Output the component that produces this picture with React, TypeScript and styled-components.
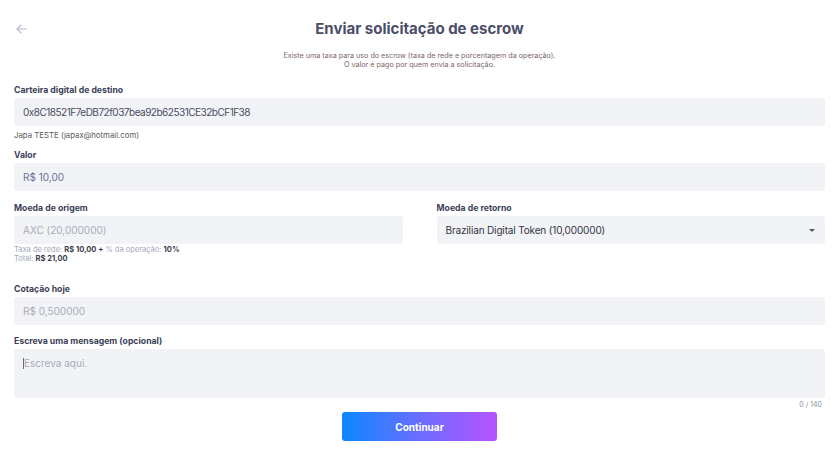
import React from "react";
import styled, { createGlobalStyle } from "styled-components";

const GlobalStyle = createGlobalStyle`
  body {
    margin: 0;
    background: #ffffff;
    font-family: Inter, "Open Sans", sans-serif;
  }
`;

const Page = styled.div`
  display: flex;
  flex-direction: column;
  width: 839px;
  padding: 0 14px;
  box-sizing: border-box;
`;

const Header = styled.div`
  display: grid;
  grid-template-columns: 40px 1fr 40px;
  align-items: center;
  padding-top: 18px;
`;

const BackButton = styled.button`
  display: flex;
  align-items: center;
  justify-content: flex-start;
  padding: 0 0 0 2px;
  border: none;
  background: none;
  cursor: pointer;
`;

const Title = styled.h1`
  margin: 0;
  font-size: 15px;
  line-height: 22px;
  font-weight: 700;
  color: #4b4e68;
  text-align: center;
`;

const Notice = styled.p`
  margin: 11px 0 0;
  font-size: 7.2px;
  line-height: 9px;
  color: #7a6566;
  text-align: center;
`;

const Field = styled.div<{ $top: number }>`
  display: flex;
  flex-direction: column;
  margin-top: ${(p) => p.$top}px;
  min-width: 0;
`;

const Label = styled.label`
  font-size: 8.7px;
  line-height: 12px;
  font-weight: 700;
  color: #3c3f57;
  margin-bottom: 2px;
`;

const Input = styled.input<{ $tone: "dark" | "blue" | "muted"; $tight?: boolean }>`
  height: 28px;
  box-sizing: border-box;
  border: none;
  border-radius: 3px;
  background: #f2f3f7;
  padding: 0 9px;
  font: inherit;
  font-size: 10px;
  letter-spacing: ${(p) => (p.$tight ? "-0.5px" : "0")};
  outline: none;
  color: ${(p) =>
    p.$tone === "dark" ? "#4a4c5e" : p.$tone === "blue" ? "#6a7091" : "#a8abb9"};
`;

const Select = styled.div`
  display: flex;
  align-items: center;
  justify-content: space-between;
  height: 28px;
  border-radius: 3px;
  background: #f2f3f7;
  padding: 0 10px 0 9px;
  font-size: 10px;
  letter-spacing: -0.15px;
  color: #33343f;
`;

const Caret = styled.span`
  width: 0;
  height: 0;
  border-left: 3px solid transparent;
  border-right: 3px solid transparent;
  border-top: 3px solid #555762;
`;

const Hint = styled.div`
  margin-top: 4px;
  font-size: 7.8px;
  line-height: 10px;
  color: #5d5858;
`;

const Row = styled.div`
  display: grid;
  grid-template-columns: 1fr 1fr;
  column-gap: 34px;
  margin-top: 11px;
`;

const Fees = styled.div`
  margin-top: 1px;
  font-size: 7.5px;
  line-height: 9px;
  color: #a3a7b8;

  b {
    color: #3a3c4c;
    font-weight: 700;
  }
`;

const MessageBox = styled.div`
  height: 49px;
  box-sizing: border-box;
  border-radius: 3px;
  background: #f2f3f7;
  padding: 8px 9px;
  font-size: 10px;
  line-height: 12px;
  color: #a8abb9;
  display: flex;
  align-items: flex-start;
`;

const TextCursor = styled.span`
  display: inline-block;
  width: 1px;
  height: 11px;
  margin-top: 1px;
  background: #6a6c78;
`;

const Counter = styled.div`
  margin-top: 2px;
  padding-right: 3px;
  text-align: right;
  font-size: 7px;
  line-height: 10px;
  color: #8b8e9a;
`;

const Footer = styled.div`
  display: flex;
  justify-content: center;
  margin-top: 2px;
`;

const ContinueButton = styled.button`
  width: 155px;
  height: 29px;
  border: none;
  border-radius: 3px;
  background: linear-gradient(90deg, #0b87ff 0%, #6a6eff 50%, #b653ff 100%);
  color: #ffffff;
  font: inherit;
  font-size: 10px;
  font-weight: 700;
  cursor: pointer;
`;

function ArrowLeft() {
  return (
    <svg width="11" height="10" viewBox="0 0 11 10" fill="none">
      <path d="M10.5 5H1M5 1L1 5l4 4" stroke="#b7b8da" strokeWidth="1.1" strokeLinecap="round" strokeLinejoin="round" />
    </svg>
  );
}

export default function App() {
  return (
    <>
      <GlobalStyle />
      <Page>
        <Header>
          <BackButton aria-label="Voltar">
            <ArrowLeft />
          </BackButton>
          <Title>Enviar solicitação de escrow</Title>
          <span />
        </Header>
        <Notice>
          Existe uma taxa para uso do escrow (taxa de rede e porcentagem da operação).
          <br />O valor é pago por quem envia a solicitação.
        </Notice>

        <Field $top={15}>
          <Label>Carteira digital de destino</Label>
          <Input $tone="dark" $tight readOnly value="0x8C18521F7eDB72f037bea92b62531CE32bCF1F38" />
          <Hint>Japa TESTE (japax@hotmail.com)</Hint>
        </Field>

        <Field $top={9}>
          <Label>Valor</Label>
          <Input $tone="blue" readOnly value="R$ 10,00" />
        </Field>

        <Row>
          <Field $top={0}>
            <Label>Moeda de origem</Label>
            <Input $tone="muted" readOnly value="AXC (20,000000)" />
            <Fees>
              Taxa de rede: <b>R$ 10,00 +</b> % da operação: <b>10%</b>
              <br />
              Total: <b>R$ 21,00</b>
            </Fees>
          </Field>
          <Field $top={0}>
            <Label>Moeda de retorno</Label>
            <Select>
              <span>Brazilian Digital Token (10,000000)</span>
              <Caret />
            </Select>
          </Field>
        </Row>

        <Field $top={20}>
          <Label>Cotação hoje</Label>
          <Input $tone="muted" readOnly value="R$ 0,500000" />
        </Field>

        <Field $top={10}>
          <Label>Escreva uma mensagem (opcional)</Label>
          <MessageBox>
            <TextCursor />
            <span>Escreva aqui.</span>
          </MessageBox>
          <Counter>0 / 140</Counter>
        </Field>

        <Footer>
          <ContinueButton>Continuar</ContinueButton>
        </Footer>
      </Page>
    </>
  );
}
